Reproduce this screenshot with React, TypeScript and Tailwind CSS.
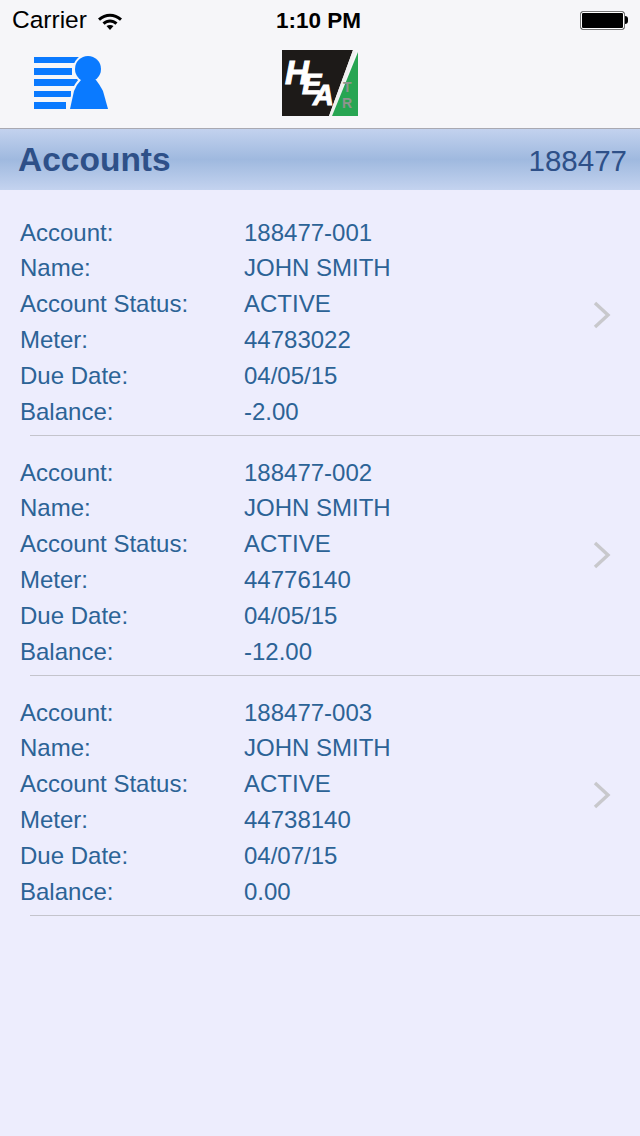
const accounts = [
  { account: "188477-001", meter: "44783022", due: "04/05/15", balance: "-2.00" },
  { account: "188477-002", meter: "44776140", due: "04/05/15", balance: "-12.00" },
  { account: "188477-003", meter: "44738140", due: "04/07/15", balance: "0.00" },
];

const Row = ({ label, value }: { label: string; value: string }) => (
  <div className="flex h-9 items-center">
    <div className="w-[224px] shrink-0">{label}</div>
    <div>{value}</div>
  </div>
);

const AccountIcon = () => (
  <svg width="75" height="54" viewBox="0 0 75 54" className="block">
    <g fill="#0a7aff">
      <path d="M0 1H48V7H0Z" />
      <path d="M0 12H38V19H0Z" />
      <path d="M0 23H48V30H0Z" />
      <path d="M0 35H37V41H0Z" />
      <path d="M0 46H32V53H0Z" />
    </g>
    <circle cx="54" cy="13" r="15" fill="#f6f6f9" />
    <path d="M36 53L40 35Q42 29 47 24H62Q66 29 69 35L74 53Z" fill="#f6f6f9" stroke="#f6f6f9" strokeWidth="4" />
    <circle cx="54" cy="13" r="13" fill="#0a7aff" />
    <path d="M36 53L40 35Q42 29 47 24H62Q66 29 69 35L74 53Z" fill="#0a7aff" />
  </svg>
);

const HeatLogo = () => (
  <div className="relative h-[66px] w-[76px] overflow-hidden">
    <svg width="76" height="66" viewBox="0 0 76 66" className="absolute inset-0">
      <path d="M0 0H71L47 66H0Z" fill="#1d1a18" />
      <path d="M71 0L47 66H50L74 2Z" fill="#f0f0f0" />
      <path d="M76 2V66H50Z" fill="#27a552" />
    </svg>
    <span className="absolute left-[3px] top-[6px] text-[33px] leading-none font-bold italic text-white [-webkit-text-stroke:1px_white]">H</span>
    <span className="absolute left-[20px] top-[20px] text-[29px] leading-none font-bold italic text-white [-webkit-text-stroke:1px_white]">E</span>
    <span className="absolute left-[31px] top-[31px] text-[29px] leading-none font-bold italic text-white [-webkit-text-stroke:1px_white]">A</span>
    <span className="absolute left-[61px] top-[30px] text-[14px] leading-none font-bold text-[#8f948f]">T</span>
    <span className="absolute left-[60px] top-[46px] text-[14px] leading-none font-bold text-[#8f948f]">R</span>
  </div>
);

export default function App() {
  return (
    <div className="flex min-h-[1136px] w-[640px] flex-col bg-[#ededfd] font-['Liberation_Sans',Arial,sans-serif]">
      <div className="h-[128px] bg-[#f6f6f9]">
        <div className="relative flex h-10 items-center justify-between pl-3 pr-[12px] text-black">
          <div className="flex items-center gap-[11px] pt-px text-[24.5px]">
            <span>Carrier</span>
            <svg width="24" height="18" viewBox="0 0 24 18">
              <path d="M0 6.5C7 .2 17 .2 24 6.5L22 8.8C15.8 3.4 8.2 3.4 2 8.8Z" fill="#000" />
              <path d="M4.5 10.5C9 6.5 15 6.5 19.5 10.5L17.4 12.8C13.8 9.8 10.2 9.8 6.6 12.8Z" fill="#000" />
              <path d="M8.5 14C10.6 12.6 13.4 12.6 15.5 14L12 18Z" fill="#000" />
            </svg>
          </div>
          <div className="absolute left-[276px] top-0 flex h-10 items-center pt-px text-[22.5px] font-bold">1:10 PM</div>
          <div className="flex items-center">
            <div className="h-[19px] w-[45px] rounded-[3px] border border-[#777] bg-black outline-1 -outline-offset-2 outline-white" />
            <div className="h-2 w-[3px] rounded-r-full bg-black" />
          </div>
        </div>
        <div className="relative flex pl-[34px] pt-[16px]">
          <AccountIcon />
          <div className="absolute left-[282px] top-[10px]">
            <HeatLogo />
          </div>
        </div>
      </div>
      <div className="h-px bg-[#a9a9b2]" />
      <div className="flex h-[61px] items-center justify-between bg-gradient-to-b from-[#c3d2ee] via-[#9fb9df] to-[#c4d3ef] pl-[18px] pr-[13px] text-[#2e5088]">
        <div className="pt-px text-[33.5px] font-bold">Accounts</div>
        <div className="pt-[3px] text-[29.5px]">188477</div>
      </div>
      <div className="pt-[25px] text-[24px] text-[#2c6396]">
        {accounts.map((a) => (
          <div key={a.account}>
            <div className="relative pl-5">
              <div className="flex h-[35px] items-center">
                <div className="w-[224px] shrink-0">Account:</div>
                <div>{a.account}</div>
              </div>
              <Row label="Name:" value="JOHN SMITH" />
              <Row label="Account Status:" value="ACTIVE" />
              <Row label="Meter:" value={a.meter} />
              <Row label="Due Date:" value={a.due} />
              <Row label="Balance:" value={a.balance} />
              <svg width="18" height="28" viewBox="0 0 18 28" className="absolute right-[29px] top-[86px]">
                <path d="M2 2L15 14L2 26" fill="none" stroke="#c8c8cc" strokeWidth="3.4" />
              </svg>
            </div>
            <div className="mb-[19px] mt-[5px] ml-[30px] h-px bg-[#c4c4cc]" />
          </div>
        ))}
      </div>
    </div>
  );
}
